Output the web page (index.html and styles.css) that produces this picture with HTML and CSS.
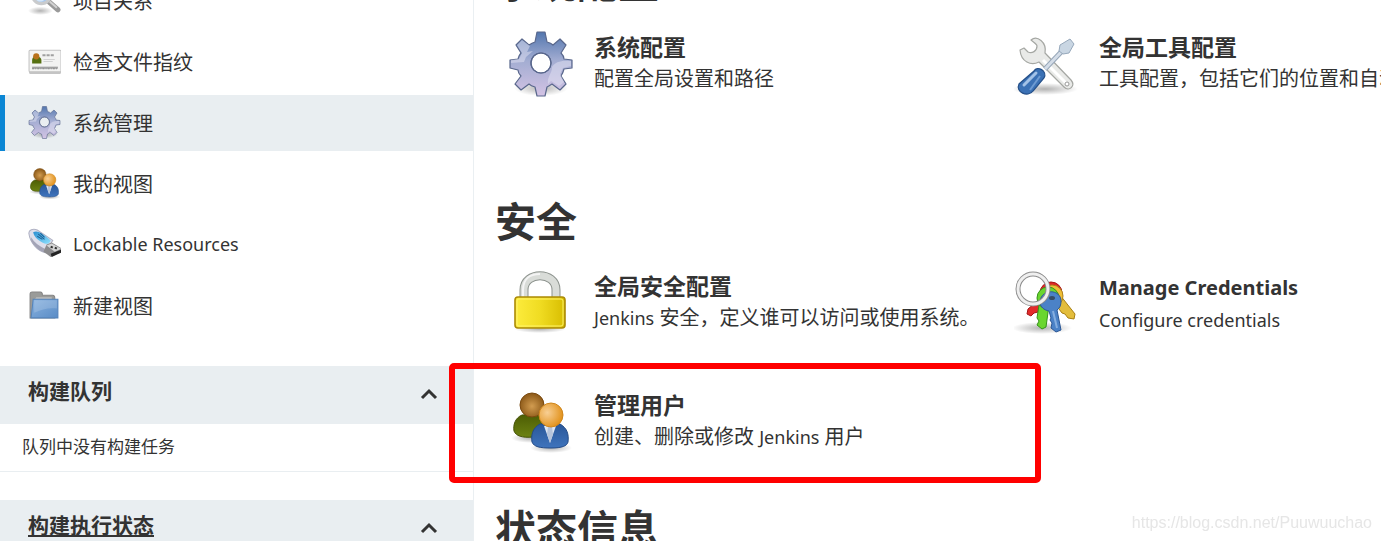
FILE: index.html
```html
<!DOCTYPE html>
<html lang="zh-CN">
<head>
  <meta charset="UTF-8">
  <meta name="viewport" content="width=device-width, initial-scale=1.0">
  <title>系统管理 [Jenkins]</title>
  <link rel="stylesheet" href="styles.css">
</head>
<body>
  <!-- Shared icons -->
  <svg class="sprite" aria-hidden="true">
    <defs>
      <linearGradient id="gearFill" x1="0" y1="0" x2="0" y2="1">
        <stop offset="0" stop-color="#5276ae"/>
        <stop offset="0.45" stop-color="#a3add2"/>
        <stop offset="1" stop-color="#d3c3e4"/>
      </linearGradient>
      <radialGradient id="shadow">
        <stop offset="0" stop-color="#000" stop-opacity="0.3"/>
        <stop offset="1" stop-color="#000" stop-opacity="0"/>
      </radialGradient>
      <radialGradient id="brownHead" cx="0.5" cy="0.55" r="0.55">
        <stop offset="0" stop-color="#d29c50"/>
        <stop offset="1" stop-color="#8a5716"/>
      </radialGradient>
      <radialGradient id="orangeHead" cx="0.35" cy="0.4" r="0.65">
        <stop offset="0" stop-color="#f8cf94"/>
        <stop offset="1" stop-color="#e2921c"/>
      </radialGradient>
      <linearGradient id="greenBody" x1="0" y1="0" x2="0" y2="1">
        <stop offset="0" stop-color="#4c5c04"/>
        <stop offset="1" stop-color="#6c8212"/>
      </linearGradient>
      <linearGradient id="blueBody" x1="0" y1="0" x2="0" y2="1">
        <stop offset="0" stop-color="#2a5799"/>
        <stop offset="1" stop-color="#3f74bd"/>
      </linearGradient>
      <linearGradient id="lockBody">
        <stop offset="0" stop-color="#fdec3d"/>
        <stop offset="0.5" stop-color="#f0dc22"/>
        <stop offset="1" stop-color="#d8bd00"/>
      </linearGradient>
      <linearGradient id="folderFill" x1="0" y1="0" x2="1" y2="1">
        <stop offset="0" stop-color="#89b2df"/>
        <stop offset="1" stop-color="#5a8cc6"/>
      </linearGradient>
      <linearGradient id="usbFill" x1="0" y1="0" x2="1" y2="1">
        <stop offset="0" stop-color="#2a8fd0"/>
        <stop offset="1" stop-color="#8fe2ff"/>
      </linearGradient>
    </defs>
    <symbol id="gear" viewBox="0 0 64 66">
      <ellipse cx="32" cy="57" rx="27" ry="8" fill="url(#shadow)"/>
      <path fill="url(#gearFill)" stroke="#59678c" stroke-width="1.2" stroke-linejoin="round" fill-rule="evenodd" d="M28 1h8l2 10q4 1 6 3l7-6 6 6-5 8q3 3 3 6l8 1v8l-8 1q-1 4-3 7l5 8-6 6-8-6q-3 2-5 3l-2 9h-8l-2-9q-4-1-6-3l-8 6-6-6 6-8q-3-3-3-6l-8-2v-8l8-1q1-4 3-6l-5-8 6-6 7 6q3-2 6-3zM32 22a10 10 0 1 0 0 20a10 10 0 1 0 0-20z"/>
      <path fill="#e3e3f3" opacity="0.5" d="M13 9l8 6-3 6 6-1-7 6-2 5-13 1v-3l8-1 3-6-5-8zM62 30v5l-8 2-3 6 4 8-5 4-8-5-3 3c-1-8 4-10 4-17 3-5 9-7 19-6z"/>
      <circle cx="32" cy="32" r="10" fill="none" stroke="#59678c" stroke-width="1.2"/>
    </symbol>
    <symbol id="users" viewBox="0 0 64 64">
      <ellipse cx="22" cy="48" rx="20" ry="5" fill="url(#shadow)"/>
      <ellipse cx="42" cy="58" rx="21" ry="5" fill="url(#shadow)"/>
      <path fill="url(#greenBody)" stroke="#445207" d="M13 25C6 28 4 35 5 41c2 5 8 7 19 6 9 0 15-3 15-8 0-8-3-12-9-15z"/>
      <circle cx="23" cy="15" r="12" fill="url(#brownHead)" stroke="#7a4a10"/>
      <path fill="url(#blueBody)" stroke="#244b86" d="M31 34c-8 4-9 12-8 18 2 5 8 6 19 6s16-2 17-6c1-8-1-14-8-18z"/>
      <path fill="#dfe7f3" d="M35 36h12l-6 17z"/>
      <path fill="#b6c4db" d="M39 37h4l1 7-3 9-3-9z"/>
      <circle cx="42" cy="25" r="12" fill="url(#orangeHead)" stroke="#cf861d"/>
    </symbol>
  </svg>

  <div class="page">
    <aside class="side-panel">
      <nav class="tasks">
        <a class="task" href="#">
          <svg class="task-icon" viewBox="0 0 32 32">
            <ellipse cx="12" cy="26" rx="12" ry="4" fill="url(#shadow)"/>
            <path d="M20 17l9 8" stroke="#9a9a9a" stroke-width="5" stroke-linecap="round"/>
            <path d="M21 17l7 6" stroke="#d2d2d2" stroke-width="2"/>
            <circle cx="13" cy="10" r="9" fill="#a5c8ef" stroke="#c9cbcd" stroke-width="3"/>
            <path d="M6 11c3-6 9-5 13-2-1 5-4 8-7 8-3 0-5-2-6-6z" fill="#d5e7fa"/>
          </svg>
          项目关系
        </a>
        <a class="task" href="#">
          <svg class="task-icon" viewBox="0 0 32 32">
            <rect x="1" y="6" width="31" height="22" rx="1" fill="#c5c5c5"/>
            <rect x="1" y="5" width="31" height="21" rx="1" fill="#f3f3f2" stroke="#c4c4c4"/>
            <path d="M4 18v-3c0-3 2-4 4-4s5 1 5 4v3z" fill="#567011"/>
            <circle cx="8" cy="11" r="3" fill="#b9721b"/>
            <path d="M14 10h12" stroke="#a0a0a0" stroke-width="2" stroke-dasharray="3 1"/>
            <path d="M15 14h11M15 16h9" stroke="#d2d2d2"/>
            <path d="M4 22h25" stroke="#a2a2a2" stroke-width="2"/>
            <path d="M4 23h25" stroke="#888" stroke-dasharray="2 1 1 1"/>
          </svg>
          检查文件指纹
        </a>
        <a class="task task-active" href="#">
          <svg class="task-icon"><use href="#gear"/></svg>
          系统管理
        </a>
        <a class="task" href="#">
          <svg class="task-icon"><use href="#users"/></svg>
          我的视图
        </a>
        <a class="task" href="#">
          <svg class="task-icon" viewBox="0 0 32 32">
            <path d="M1 6C0 2 5 0 9 2l15 10-7 12C9 22 2 14 1 6z" fill="#dedfeb" stroke="#b0b2c4"/>
            <path d="M3 12c3 6 8 10 14 12l1-3C11 18 6 14 3 9z" fill="#a3a4b6"/>
            <path d="M5 4c4-2 8 0 17 8-1 3-3 4-6 3C10 12 6 9 5 4z" fill="url(#usbFill)"/>
            <path d="M10 6l6 5M12 5l4 4M9 8l5 3" stroke="#1a5f94" stroke-width="1"/>
            <path d="M18 16l5-2 10 6-2 4-9 4-7-5z" fill="#8b8b8d"/>
            <path d="M18 17l5-2 9 5-6 3z" fill="#d5d5d5"/>
            <path d="M22 25l10-4v3l-9 4z" fill="#242424"/>
            <path d="M22 18l2 1M26 19l2 1" stroke="#333" stroke-width="2"/>
          </svg>
          <span class="latin">Lockable Resources</span>
        </a>
        <a class="task" href="#">
          <svg class="task-icon" viewBox="0 0 32 32">
            <path d="M2 28V5q0-2 2-2h8q2 0 2 3h10q2 0 2 3v19z" fill="#9a9b99" stroke="#858585"/>
            <path d="M8 8h15v3H6z" fill="#bdbdbb"/>
            <path d="M5 10h24v18H3z" fill="url(#folderFill)" stroke="#5584bb"/>
            <path d="M6 11h22v8c-8-1-15 1-22 4z" fill="#fff" opacity="0.16"/>
          </svg>
          新建视图
        </a>
      </nav>

      <section class="pane">
        <div class="pane-header">
          <h2 class="pane-title">构建队列</h2>
          <button class="collapse" type="button" aria-label="收起构建队列">
            <svg viewBox="0 0 18 12"><path d="M2 10l7-7 7 7"/></svg>
          </button>
        </div>
        <p class="pane-content">队列中没有构建任务</p>
      </section>

      <section class="pane">
        <div class="pane-header">
          <h2 class="pane-title"><a href="#">构建执行状态</a></h2>
          <button class="collapse" type="button" aria-label="收起构建执行状态">
            <svg viewBox="0 0 18 12"><path d="M2 10l7-7 7 7"/></svg>
          </button>
        </div>
      </section>
    </aside>

    <main class="main-panel">
      <section class="category category-system">
        <h1>系统配置</h1>
        <div class="links">
          <a class="link" href="#">
            <svg class="link-icon"><use href="#gear"/></svg>
            <span class="link-text">
              <strong>系统配置</strong>
              <span>配置全局设置和路径</span>
            </span>
          </a>
          <a class="link" href="#">
            <svg class="link-icon" viewBox="0 0 64 64">
              <ellipse cx="31" cy="57" rx="33" ry="6" fill="url(#shadow)"/>
              <path fill="#e9eae8" stroke="#a5a7a3" stroke-width="1.2" stroke-linejoin="round" d="M17 8C23 3 33 10 31 21l26 27c5 6-2 12-7 7L25 30C17 34 7 30 6 18l4-2 4 4c4 2 9-1 9-6 0-2-4-4-6-6z"/>
              <path fill="none" stroke="#fff" stroke-width="3" d="M29 28l24 24"/>
              <circle cx="53" cy="52" r="2" fill="#fff" stroke="#999"/>
              <path d="M31 37l18-19" stroke="#96a6b8" stroke-width="5"/>
              <path d="M31 37l18-19" stroke="#d4dde8" stroke-width="3"/>
              <path fill="#c9d6e3" stroke="#96a8bb" d="M45 19l1-6 10-6 4 5-5 9-6 1z"/>
              <path fill="#3b71b5" stroke="#244f88" stroke-width="1.2" d="M20 39c3-6 14 0 10 7L19 59C14 66 1 60 5 52z"/>
              <path fill="none" stroke="#a3c2e7" stroke-width="3" stroke-linecap="round" d="M22 41L10 53"/>
              <path fill="none" stroke="#6e9bd2" stroke-width="2" d="M26 44L16 58"/>
            </svg>
            <span class="link-text">
              <strong>全局工具配置</strong>
              <span>工具配置，包括它们的位置和自动安装器</span>
            </span>
          </a>
        </div>
      </section>

      <section class="category">
        <h1>安全</h1>
        <div class="links">
          <a class="link" href="#">
            <svg class="link-icon" viewBox="0 0 64 64">
              <ellipse cx="31" cy="58" rx="26" ry="4" fill="url(#shadow)"/>
              <path d="M15 28V19C15 0 47 0 47 19v9" fill="none" stroke="#8d938e" stroke-width="9"/>
              <path d="M15 28V19C15 0 47 0 47 19v9" fill="none" stroke="#d9dcd8" stroke-width="7"/>
              <path d="M14 28V19C14 7 22 3 31 3" fill="none" stroke="#f4f4f4" stroke-width="2"/>
              <rect x="6" y="26" width="50" height="31" rx="3" fill="url(#lockBody)" stroke="#ac8b06" stroke-width="1.6"/>
              <rect x="8" y="28" width="46" height="27" rx="2" fill="none" stroke="#fff36a"/>
            </svg>
            <span class="link-text">
              <strong>全局安全配置</strong>
              <span><span class="latin">Jenkins</span> 安全，定义谁可以访问或使用系统。</span>
            </span>
          </a>
          <a class="link" href="#">
            <svg class="link-icon" viewBox="0 0 64 64">
              <ellipse cx="28" cy="57" rx="30" ry="6" fill="url(#shadow)"/>
              <path fill="#e32b2b" stroke="#a51515" d="M28 26l-14 12-1 5 4 2 3-3 4-1 8-8z"/>
              <path fill="#e3bd3c" stroke="#a98012" d="M46 24l15 19-1 5-6-1-3-4-3-1-9-12z"/>
              <circle cx="37" cy="22" r="11" fill="#df2727" stroke="#a51515"/>
              <circle cx="38" cy="25" r="11" fill="#efbe36" stroke="#ae841b"/>
              <path fill="#6ad62e" stroke="#36921a" d="M25 34h10l-3 22-4 2-5-4 2-4-2-3z"/>
              <circle cx="34" cy="27" r="11" fill="#6ad62e" stroke="#36921a"/>
              <path fill="#4b82c7" stroke="#2b5796" d="M26 31c1-14 21-13 21-1 0 4-1 7-4 9l4 20-5 2-5-4 1-5-2-3 1-2-2-7c-5-1-9-4-9-9z"/>
              <path d="M39 40l4 17" stroke="#85aee0" stroke-width="2"/>
              <ellipse cx="38" cy="27" rx="3" ry="2" fill="#354c65"/>
              <circle cx="19" cy="18" r="15" fill="none" stroke="#8d8d8d" stroke-width="5"/>
              <circle cx="19" cy="18" r="15" fill="none" stroke="#efefef" stroke-width="3"/>
            </svg>
            <span class="link-text">
              <strong><span class="latin">Manage Credentials</span></strong>
              <span><span class="latin">Configure credentials</span></span>
            </span>
          </a>
          <a class="link link-marked" href="#">
            <svg class="link-icon"><use href="#users"/></svg>
            <span class="link-text">
              <strong>管理用户</strong>
              <span>创建、删除或修改 <span class="latin">Jenkins</span> 用户</span>
            </span>
          </a>
        </div>
      </section>

      <section class="category">
        <h1>状态信息</h1>
      </section>
    </main>
  </div>
  <div class="watermark">https://blog.csdn.net/Puuwuuchao</div>
</body>
</html>
```
FILE: styles.css
```css
*, *::after {
  box-sizing: border-box;
}

body {
  margin: 0;
  height: 100vh;
  overflow: hidden;
  background-color: #fff;
  color: #333;
  font-family: "Noto Sans", "Noto Sans CJK SC", sans-serif;
  font-size: 20px;
}

a {
  color: inherit;
  text-decoration: none;
}

h1, h2, p {
  margin: 0;
}

/* Latin letters run large beside the Chinese ones */
.latin {
  font-size: 18px;
}

strong .latin {
  font-size: 20px;
}

.sprite {
  position: absolute;
  width: 0;
  height: 0;
}

.page {
  display: flex;
  align-items: stretch;
  height: 100%;
  overflow: hidden;
}

/*---------------------------------- SIDE PANEL ----------------------------------*/
.side-panel {
  flex: 0 0 474px;
  border-right: 1px solid #eaeff2;
}

.tasks {
  display: flex;
  flex-direction: column;
  gap: 5px;
  margin-top: -27px; /* scrolled part way past the first task */
  margin-bottom: 32px;
}

.task {
  display: flex;
  align-items: center;
  gap: 12px;
  height: 56px;
  padding-left: 28px;
  padding-bottom: 2px;
}

.task-active {
  border-left: 5px solid #0b86d4;
  padding-left: 23px;
  background-color: #e9eef1;
}

.task-icon {
  width: 33px;
  height: 33px;
}

.pane {
  margin-bottom: 28px;
}

.pane-header {
  display: flex;
  justify-content: space-between;
  height: 58px;
  padding: 10px 35px 0 28px;
  background-color: #e9eef1;
}

.pane-title {
  font-size: 21px;
  line-height: 30px;
}

.pane-title a {
  text-decoration: underline;
}

.collapse {
  display: flex;
  align-items: center;
  height: 36px;
  padding: 0;
  border: none;
  background: none;
}

.collapse svg {
  width: 18px;
  height: 12px;
  fill: none;
  stroke: #333;
  stroke-width: 3;
}

.pane-content {
  height: 48px;
  padding-left: 22px;
  border-bottom: 1px solid #e9eef1;
  font-size: 17px;
  line-height: 46px;
}

/*---------------------------------- MAIN PANEL ----------------------------------*/
.main-panel {
  flex: 1;
  min-width: 0;
  margin-top: -42px;
  padding-left: 21px;
}

.category {
  margin-bottom: 22px;
}

.category h1 {
  font-size: 41px;
  line-height: 48px;
}

.links {
  display: grid;
  grid-template-columns: repeat(2, minmax(505px, 1fr));
  grid-auto-rows: 119px;
}

.category-system .links {
  grid-auto-rows: 169px;
}

.link {
  position: relative;
  display: flex;
  align-items: flex-start;
  gap: 21px;
  padding: 25px 0 0 14px;
  white-space: nowrap;
}

.link-icon {
  flex: none;
  width: 64px;
  height: 66px;
}

.link-text {
  display: flex;
  flex-direction: column;
  line-height: 32px;
}

.link-text strong {
  font-size: 23px;
}

/* red frame drawn over the link */
.link-marked::after {
  content: '';
  position: absolute;
  top: -1px;
  left: -46px;
  width: 592px;
  height: 120px;
  border: 6px solid #f00;
  border-radius: 5px;
}

.watermark {
  position: fixed;
  right: 9px;
  bottom: 8px;
  color: #e6e6e6;
  font-family: "Liberation Sans", Arial, sans-serif;
  font-size: 16px;
  line-height: 20px;
}
```
